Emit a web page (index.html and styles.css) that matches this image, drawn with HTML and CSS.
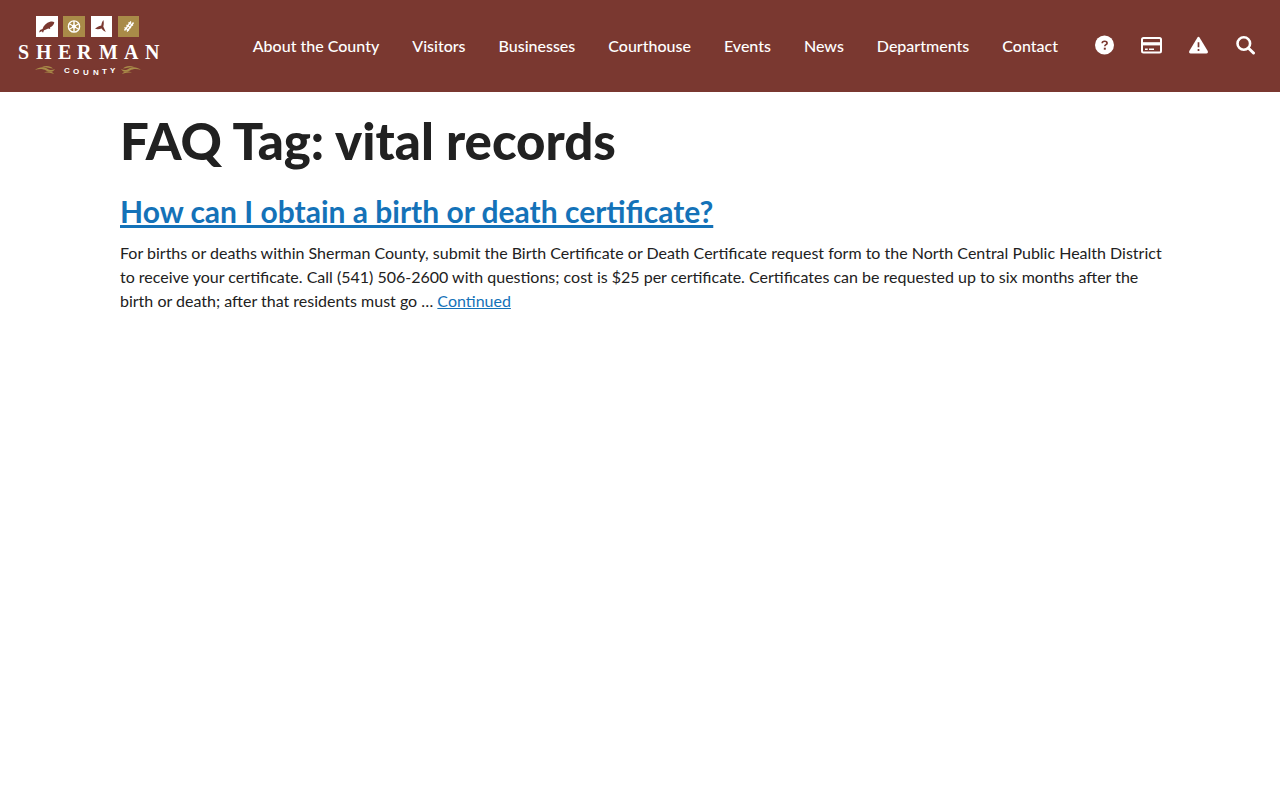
FILE: index.html
```html
<!DOCTYPE html>
<html lang="en">

<head>
    <meta charset="UTF-8">
    <meta name="viewport" content="width=device-width, initial-scale=1.0">
    <title>vital records - Sherman County</title>
    <link rel="stylesheet" href="styles.css">
</head>

<body>
    <!-- Site header -->
    <header class="site-header">
        <a class="logo" href="#" aria-label="Sherman County">
            <svg width="146" height="62" viewBox="0 0 146 62">
                <!-- Tiles -->
                <rect class="tile-light" x="20" y="1" width="22" height="21"/>
                <rect class="tile-gold" x="47" y="1" width="22" height="21"/>
                <rect class="tile-light" x="75" y="1" width="21" height="21"/>
                <rect class="tile-gold" x="102" y="1" width="21" height="21"/>
                <!-- Fish -->
                <path class="mark-red" d="M23 17.500l1-2.500 2.500-1c1-3.500 4-6.300 7.500-7.300 1.800-.5 3.300-.3 4.300.5-.2 2-1.800 4-4.300 5.200l.2 1.700-2-.7c-1.500.9-3 1.200-4.200 1.800l-1 2.600-1.200-1.500z"/>
                <!-- Wheel -->
                <g class="wheel">
                    <circle cx="58" cy="11.500" r="5.600"/>
                    <circle cx="58" cy="11.500" r="1.200"/>
                    <path d="M58 6v11M52.800 8.500l10.400 6M52.800 14.500l10.400-6"/>
                </g>
                <!-- Turbine -->
                <path class="mark-red" d="M85.300 10.500c.2-2 1-4 2-5.500.7 2 .6 4.500 0 6.500l2.500 5.500c-1.700-.8-3.500-2-4.200-3.500-2 .8-4.300 1-6.600.3 1.500-1.500 4-2.700 6.300-3.300z"/>
                <!-- Wheat -->
                <g class="wheat">
                    <path d="M108.500 15.500l6.500-9M111 16.500l6.500-9"/>
                    <path d="M108.500 12.500l4.500 3M110.500 10l4.500 3M112.500 7.500l4.500 3"/>
                </g>
                <text class="logo-name" y="44" x="2 20 42 61 83 108 129">SHERMAN</text>
                <text class="logo-sub" y="58 59 60 60 59 58" x="48 57 67 77 86 94">COUNTY</text>
                <!-- Flourishes -->
                <g class="tile-gold">
                    <path d="M19 55c4-3.500 9-3.500 12-1.500s5 2 8 .5c-2 3.500-6 3.500-9 1.500s-7-2-11-.5z"/>
                    <path d="M26 52c4-2 9-1 11 1.500-3-.3-6-1.500-11-1.500zM28 57.500c4-1.500 8-1.200 10 1.500-3-1.500-6-1.500-10-1.500z"/>
                    <path d="M125 55c-4-3.500-9-3.500-12-1.500s-5 2-8 .5c2 3.500 6 3.500 9 1.500s7-2 11-.5z"/>
                    <path d="M118 52c-4-2-9-1-11 1.500 3-.3 6-1.500 11-1.500zM116 57.500c-4-1.500-8-1.200-10 1.500 3-1.500 6-1.500 10-1.500z"/>
                </g>
            </svg>
        </a>

        <nav class="main-nav" aria-label="Main">
            <a href="#">About the County</a>
            <a href="#">Visitors</a>
            <a href="#">Businesses</a>
            <a href="#">Courthouse</a>
            <a href="#">Events</a>
            <a href="#">News</a>
            <a href="#">Departments</a>
            <a href="#">Contact</a>
        </nav>

        <div class="quick-links">
            <a href="#" aria-label="FAQs">
                <svg width="22" height="20" viewBox="0 0 22 20">
                    <circle cx="10.500" cy="10" r="9.500" fill="#fff"/>
                    <path d="M8.200 8.200c0-1.300.9-1.900 2.400-1.900s2.500.7 2.500 1.900c0 1.500-2.300 1.500-2.300 3" fill="none" stroke="#7a3830" stroke-width="1.600"/>
                    <rect x="9.800" y="12.700" width="2" height="2" fill="#7a3830"/>
                </svg>
            </a>
            <a href="#" aria-label="Payments">
                <svg width="22" height="20" viewBox="0 0 22 20">
                    <rect x="1" y="3" width="19" height="14.500" rx="1.500" fill="none" stroke="#fff" stroke-width="2"/>
                    <path d="M1 8.800h19" stroke="#fff" stroke-width="3.200"/>
                    <path d="M4 14.200h2.700M8 14.200h5" stroke="#fff" stroke-width="1.600"/>
                </svg>
            </a>
            <a href="#" aria-label="Alerts">
                <svg width="22" height="20" viewBox="0 0 22 20">
                    <path d="M9.300 2.700q1.200-1.800 2.400 0l8 13.300q.8 2.300-1.300 2.500H2.600q-2.100-.2-1.300-2.500z" fill="#fff"/>
                    <path d="M10.500 7.300v5M10.500 13.900v2" stroke="#7a3830" stroke-width="1.700"/>
                </svg>
            </a>
            <button type="button" aria-label="Search">
                <svg width="22" height="20" viewBox="0 0 22 20" fill="none" stroke="#fff">
                    <circle cx="8.800" cy="8.500" r="6.300" stroke-width="2.600"/>
                    <path d="M13.300 13l5.200 5" stroke-width="3" stroke-linecap="round"/>
                </svg>
            </button>
        </div>
    </header>

    <!-- FAQ archive -->
    <main class="content">
        <h1>FAQ Tag: vital records</h1>
        <article class="faq">
            <h2><a href="#">How can I obtain a birth or death certificate?</a></h2>
            <p>For births or deaths within Sherman County, submit the Birth Certificate or Death Certificate request form to the North Central Public Health District to receive your certificate. Call (541) 506-2600 with questions; cost is $25 per certificate. Certificates can be requested up to six months after the birth or death; after that residents must go … <a href="#">Continued</a></p>
        </article>
    </main>
</body>

</html>
```

FILE: styles.css
```css
/* General styles */
body {
    margin: 0;
    font-family: Lato, sans-serif;
    font-size: 16px;
    line-height: 24px;
    color: #212121;
    background-color: #fff;
}

a {
    color: #1472b8;
}

/* Header */
.site-header {
    display: flex;
    align-items: center;
    min-height: 92px;
    padding: 0 23px 0 16px;
    box-sizing: border-box;
    background-color: #7a3830;
}

.logo svg,
.quick-links svg {
    display: block;
}

/* Logo artwork */
.tile-light {
    fill: #fff;
}

.tile-gold {
    fill: #a98b48;
}

.mark-red {
    fill: #7a3830;
}

.wheel,
.wheat {
    fill: none;
    stroke: #fff;
    stroke-width: 1.4;
}

.logo-name {
    fill: #fff;
    font-family: "Liberation Serif", serif;
    font-size: 20px;
    font-weight: bold;
}

.logo-sub {
    fill: #fff;
    font-family: "Liberation Sans", sans-serif;
    font-size: 8px;
    font-weight: bold;
}

/* Navigation */
.main-nav {
    display: flex;
    gap: 33px;
    margin-left: auto;
}

.main-nav a {
    color: #fff;
    font-weight: 500;
    text-decoration: none;
}

.quick-links {
    display: flex;
    gap: 25px;
    margin-left: 36px;
    padding-bottom: 2px;
}

.quick-links button {
    padding: 0;
    border: 0;
    background: none;
    cursor: pointer;
}

/* Page content */
.content {
    max-width: 1048px;
    margin: 0 auto;
    padding: 19px 16px 20px 24px;
}

h1 {
    margin: 0 0 20px;
    font-size: 51px;
    font-weight: 900;
    line-height: 60px;
}

.faq h2 {
    margin: 0 0 10px;
    font-size: 30px;
    font-weight: 700;
    line-height: 40px;
}

.faq p {
    margin: 0;
}
```
